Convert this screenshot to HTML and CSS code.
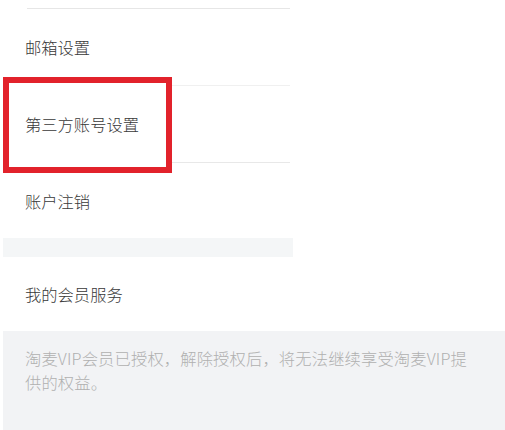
FILE: index.html
```html
<!DOCTYPE html>
<html lang="zh-CN">
<head>
<meta charset="utf-8">
<link rel="stylesheet" href="styles.css">
</head>
<body>
<div class="page">
  <div class="top-gap"></div>
  <div class="list">
    <div class="row row-first"><span class="label">邮箱设置</span></div>
    <div class="row row-marked"><span class="label">第三方账号设置</span></div>
    <div class="row row-last"><span class="label">账户注销</span></div>
  </div>
  <div class="band"></div>
  <div class="list">
    <div class="row row-single"><span class="label">我的会员服务</span></div>
  </div>
  <div class="footer">
    <p class="note">淘麦VIP会员已授权，解除授权后，将无法继续享受淘麦VIP提供的权益。</p>
  </div>
</div>
</body>
</html>
```

FILE: styles.css
```css
*, *::before, *::after { box-sizing: border-box; }
html, body { margin: 0; padding: 0; background: #ffffff; }
body {
  font-family: "Noto Sans CJK SC", "Noto Sans", sans-serif;
  width: 505px;
  height: 430px;
  overflow: hidden;
}
.page {
  padding-left: 3px;
}
.top-gap {
  height: 8px;
}
.list {
  width: 287px;
}
.row {
  margin-left: 24px;
  display: flex;
  align-items: center;
  position: relative;
}
.label {
  position: relative;
  z-index: 1;
  margin-left: -2px;
  font-size: 16.3px;
  font-weight: 300;
  line-height: 24px;
  color: #383838;
}
.row-first {
  border-top: 1px solid #e6e6e6;
  border-bottom: 1px solid #f0f0f0;
  height: 78px;
}
.row-marked {
  border-bottom: 1px solid #e8e8e8;
  height: 77px;
}
.row-marked::before {
  content: "";
  position: absolute;
  left: -24px;
  top: -9px;
  width: 169px;
  height: 96px;
  border: 6px solid #e2222b;
  background: #ffffff;
}
.row-last {
  height: 75px;
}
.band {
  width: 290px;
  height: 19px;
  background: #f4f6f7;
}
.row-single {
  height: 74px;
}
.footer {
  background: #f2f3f5;
  height: 99px;
  padding: 15px 24px 0 22px;
}
.note {
  margin: 0;
  font-size: 16.3px;
  font-weight: 300;
  line-height: 24px;
  color: #b0b0b0;
  letter-spacing: 0.15px;
}
```
